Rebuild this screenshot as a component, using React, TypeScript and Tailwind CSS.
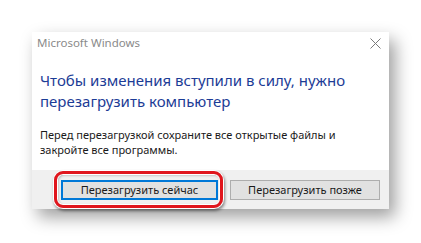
export default function App() {
  return (
    <div className="w-[421px] h-[243px] bg-white overflow-hidden pt-[32px] pl-[32px] font-['Noto_Sans','Open_Sans',sans-serif]">
      <div className="w-[357px] bg-white shadow-[6px_8px_16px_rgba(0,0,0,0.38)]">
        {/* Title bar */}
        <div className="flex items-center justify-between pt-[3px] pl-[5px] pr-[8px] h-[19px]">
          <span className="text-[11.5px] leading-[16px] text-[#8a8a8a]">Microsoft Windows</span>
          <svg width="11" height="11" viewBox="0 0 11 11" className="mt-[1px]">
            <path d="M0.5 0.5 L10.5 10.5 M10.5 0.5 L0.5 10.5" stroke="#7a7a7a" strokeWidth="1" fill="none" />
          </svg>
        </div>

        {/* Content */}
        <div className="pl-[8px] pr-[10px] pt-[19px] pb-[13px]">
          <p className="text-[15px] leading-[21px] text-[#1c3c96]">
            Чтобы изменения вступили в силу, нужно
            <br />
            перезагрузить компьютер
          </p>
          <p className="mt-[15px] text-[11px] leading-[15px] text-[#1a1a1a]">
            Перед перезагрузкой сохраните все открытые файлы и
            <br />
            закройте все программы.
          </p>
        </div>

        {/* Footer */}
        <div className="relative flex justify-end gap-[12px] bg-[#f0f0f0] pt-[10px] pb-[9px] pr-[9px] h-[39px]">
          <button className="w-[157px] h-[20px] bg-[#e1e1e1] border-2 border-[#0078d7] text-[11px] leading-[16px] text-[#1a1a1a]">
            Перезагрузить сейчас
          </button>
          <button className="w-[150px] h-[20px] bg-[#e1e1e1] border border-[#adadad] text-[11px] leading-[16px] text-[#1a1a1a]">
            Перезагрузить позже
          </button>
          <div className="absolute left-[22px] top-[1px] w-[169px] h-[37px] rounded-[9px] border-[3px] border-[#e0161d] shadow-[0_0_0_1px_#ffffff,1px_2px_3px_1px_rgba(0,0,0,0.45),inset_0_0_0_1px_#ffffff,inset_1px_1px_3px_rgba(0,0,0,0.35)]" />
        </div>
      </div>
    </div>
  );
}
